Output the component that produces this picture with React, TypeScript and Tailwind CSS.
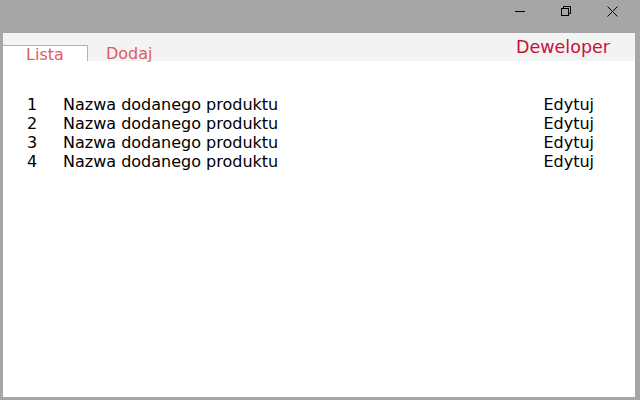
import React from 'react';

const items = [1, 2, 3, 4].map(n => ({ id: n, name: 'Nazwa dodanego produktu' }));

export default function App() {
  return (
    <div className="w-[640px] h-[400px] bg-[#a6a6a6] flex flex-col font-['DejaVu_Sans',sans-serif]">
      {/* Title bar */}
      <div className="h-[33px] flex justify-end items-start shrink-0">
        <button className="w-[46px] h-[22px] flex items-center justify-center">
          <svg width="10" height="10" viewBox="0 0 10 10"><path d="M0 5.5h10" stroke="#000" strokeWidth="1" /></svg>
        </button>
        <button className="w-[46px] h-[22px] flex items-center justify-center">
          <svg width="10" height="10" viewBox="0 0 10 10" fill="none" stroke="#000" strokeWidth="1">
            <rect x="0.5" y="2.5" width="7" height="7" />
            <path d="M2.5 2.5v-2h7v7h-2" />
          </svg>
        </button>
        <button className="w-[46px] h-[22px] flex items-center justify-center mr-[5px]">
          <svg width="11" height="11" viewBox="0 0 11 11" stroke="#000" strokeWidth="1"><path d="M0.5 0.5l10 10M10.5 0.5l-10 10" /></svg>
        </button>
      </div>

      {/* Window body */}
      <div className="flex-1 ml-[3px] mr-[5px] mb-[3px] bg-white flex flex-col">
        <div className="h-[28px] bg-[#f3f3f3] flex items-end justify-between">
          <div className="flex items-end">
            <div className="w-[85px] h-[16px] bg-white border-t border-r border-[#b9b0b0] flex justify-center">
              <span className="text-[16px] leading-[16px] text-[#e05c5c] mt-[1px]">Lista</span>
            </div>
            <span className="ml-[18px] text-[16px] leading-[16px] text-[#e05c5c] -mb-[1px]">Dodaj</span>
          </div>
          <span className="mr-[25px] mb-[5px] text-[17.5px] leading-none text-[#c8103c]">Deweloper</span>
        </div>

        <div className="pt-[34px] pl-[24px] pr-[41px] text-[16px] leading-[19px] text-black">
          {items.map(item => (
            <div key={item.id} className="flex">
              <span className="w-[36px]">{item.id}</span>
              <span className="flex-1">{item.name}</span>
              <span>Edytuj</span>
            </div>
          ))}
        </div>
      </div>
    </div>
  );
}
